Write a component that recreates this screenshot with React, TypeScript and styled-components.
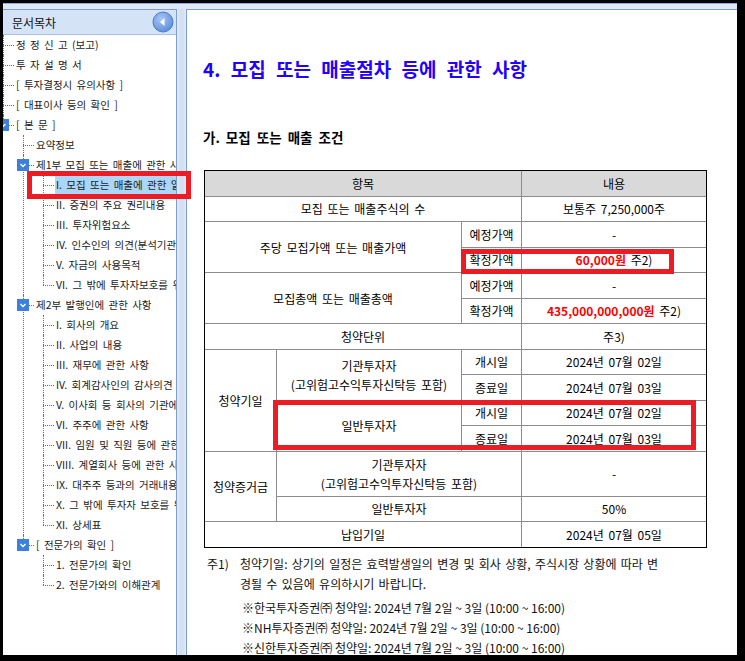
import React from "react";
import styled, { createGlobalStyle } from "styled-components";

const GlobalStyle = createGlobalStyle`
  html, body {
    margin: 0;
    padding: 0;
    background: #000;
  }
  body {
    font-family: "Noto Sans CJK KR", "Noto Sans", sans-serif;
    color: #000;
  }
`;

const Screen = styled.div`
  position: relative;
  width: 745px;
  height: 661px;
  box-sizing: border-box;
  padding: 3px 8px 6px 3px;
  background: #000;
`;

const Frame = styled.div`
  display: flex;
  height: 100%;
  box-sizing: border-box;
  padding-top: 5px;
  background: #dfe8f6;
  border-top: 1px solid #8eaee0;
`;

const Sidebar = styled.aside`
  width: 174px;
  flex: none;
  display: flex;
  flex-direction: column;
  box-sizing: border-box;
  background: #fff;
  border-top: 1px solid #7a9fd6;
  border-right: 1px solid #7a9fd6;
  overflow: hidden;
`;

const SideHeader = styled.div`
  height: 24px;
  flex: none;
  display: flex;
  align-items: center;
  justify-content: space-between;
  padding: 0 2px 0 9px;
  background: #d5e3f7;
  border-bottom: 1px solid #a9c1e8;
  font-size: 12px;
  color: #111;
`;

const CollapseButton = styled.button`
  width: 22px;
  height: 22px;
  padding: 0;
  border: none;
  background: none;
  display: flex;
`;

const Tree = styled.div`
  flex: 1;
  overflow: hidden;
`;

const Branch = styled.ul<{ $root?: boolean }>`
  list-style: none;
  margin: 0;
  padding: 0 0 0 ${(p) => (p.$root ? 0 : 20)}px;
`;

const Node = styled.li<{ $last?: boolean }>`
  position: relative;
  &::before {
    content: "";
    position: absolute;
    left: 0;
    top: 0;
    ${(p) => (p.$last ? "height: 10px;" : "bottom: 0;")}
    border-left: 1px dotted #6d6d6d;
  }
  &::after {
    content: "";
    position: absolute;
    left: 0;
    top: 10px;
    width: 11px;
    border-top: 1px dotted #6d6d6d;
  }
`;

const NodeRow = styled.div`
  position: relative;
  height: 20px;
  display: flex;
  padding-left: 12px;
`;

const NodeLabel = styled.span<{ $selected?: boolean }>`
  flex: 1;
  min-width: 0;
  white-space: nowrap;
  overflow: hidden;
  font-size: 10.5px;
  line-height: 20px;
  word-spacing: 2px;
  color: #1a1a1a;
  padding-left: 1px;
  background: ${(p) => (p.$selected ? "#acd6f7" : "transparent")};
`;

const Toggle = styled.span`
  position: absolute;
  z-index: 1;
  left: -6px;
  top: 4px;
  width: 12px;
  height: 12px;
  display: flex;
`;

const Splitter = styled.div`
  width: 9px;
  flex: none;
  background: linear-gradient(90deg, #e2eaf7 0%, #d3def0 45%, #d3def0 60%, #e2eaf7 100%);
`;

const Content = styled.main`
  flex: 1;
  min-width: 0;
  box-sizing: border-box;
  background: #fff;
  border-top: 1px solid #7a9fd6;
  border-left: 1px solid #7a9fd6;
  padding: 47px 0 0 16px;
  overflow: hidden;
`;

const Title = styled.h1`
  margin: 0;
  font-size: 19px;
  line-height: 24px;
  font-weight: 700;
  color: #2200ff;
  word-spacing: 6px;
`;

const SubTitle = styled.h2`
  margin: 47px 0 0;
  font-size: 13.5px;
  line-height: 18px;
  font-weight: 700;
  word-spacing: 3px;
  color: #000;
`;

const TableWrap = styled.div`
  position: relative;
  width: 502px;
  margin: 24px 0 0 1px;
`;

const Table = styled.table`
  width: 502px;
  table-layout: fixed;
  border-collapse: collapse;
  outline: 1px solid #000;
  outline-offset: -1px;
`;

const Row = styled.tr<{ $tall?: boolean }>`
  height: ${(p) => (p.$tall ? 45 : 25.5)}px;
`;

const Cell = styled.td<{ $head?: boolean }>`
  border: 1px solid #8c8c8c;
  padding: 0 2px;
  text-align: center;
  vertical-align: middle;
  font-size: 12px;
  line-height: 19px;
  word-spacing: 2px;
  color: #000;
  background: ${(p) => (p.$head ? "#d9d9d9" : "#fff")};
`;

const Amount = styled.b`
  color: #ff0000;
  font-weight: 700;
`;

const Mark = styled.div`
  position: absolute;
  box-sizing: border-box;
  border: 5px solid #ec1c24;
  pointer-events: none;
`;

const Notes = styled.div`
  margin: 6px 0 0 4px;
  font-size: 12px;
  line-height: 20px;
  color: #111;
`;

const NoteRow = styled.div`
  display: flex;
  word-spacing: 1.6px;
`;

const NoteKey = styled.span`
  width: 33px;
  flex: none;
`;

const NoteList = styled.div`
  margin: 4px 0 0 35px;
`;

type TreeItem = { label: string; selected?: boolean; children?: TreeItem[] };

const leaves = (labels: string[]): TreeItem[] => labels.map((label) => ({ label }));

const tree: TreeItem[] = [
  { label: "정 정 신 고 (보고)" },
  { label: "투 자 설 명 서" },
  { label: "[ 투자결정시 유의사항 ]" },
  { label: "[ 대표이사 등의 확인 ]" },
  {
    label: "[ 본 문 ]",
    children: [
      { label: "요약정보" },
      {
        label: "제1부 모집 또는 매출에 관한 사항",
        children: [
          { label: "I. 모집 또는 매출에 관한 일반사항", selected: true },
          ...leaves([
            "II. 증권의 주요 권리내용",
            "III. 투자위험요소",
            "IV. 인수인의 의견(분석기관의 평가의견)",
            "V. 자금의 사용목적",
            "VI. 그 밖에 투자자보호를 위해 필요한 사항",
          ]),
        ],
      },
      {
        label: "제2부 발행인에 관한 사항",
        children: leaves([
          "I. 회사의 개요",
          "II. 사업의 내용",
          "III. 재무에 관한 사항",
          "IV. 회계감사인의 감사의견 등",
          "V. 이사회 등 회사의 기관에 관한 사항",
          "VI. 주주에 관한 사항",
          "VII. 임원 및 직원 등에 관한 사항",
          "VIII. 계열회사 등에 관한 사항",
          "IX. 대주주 등과의 거래내용",
          "X. 그 밖에 투자자 보호를 위하여 필요한 사항",
          "XI. 상세표",
        ]),
      },
      {
        label: "[ 전문가의 확인 ]",
        children: leaves(["1. 전문가의 확인", "2. 전문가와의 이해관계"]),
      },
    ],
  },
];

const ToggleIcon = () => (
  <svg width="12" height="12" viewBox="0 0 12 12">
    <rect x="0" y="0" width="12" height="12" fill="#3d7fdf" />
    <polyline points="3.5,5 6,7.5 8.5,5" fill="none" stroke="#fff" strokeWidth="1.4" />
  </svg>
);

const CollapseIcon = () => (
  <svg width="22" height="22" viewBox="0 0 22 22">
    <defs>
      <radialGradient id="cb" cx="40%" cy="35%" r="70%">
        <stop offset="0%" stopColor="#a9c6f2" />
        <stop offset="100%" stopColor="#5b8ddb" />
      </radialGradient>
    </defs>
    <circle cx="11" cy="11" r="10" fill="url(#cb)" stroke="#4b7bcd" strokeWidth="1" />
    <polygon points="12.5,7 12.5,15 8,11" fill="#fff" />
  </svg>
);

const TreeBranch = ({ items, root }: { items: TreeItem[]; root?: boolean }) => (
  <Branch $root={root}>
    {items.map((item, i) => (
      <Node key={item.label} $last={i === items.length - 1}>
        <NodeRow>
          {item.children && (
            <Toggle>
              <ToggleIcon />
            </Toggle>
          )}
          <NodeLabel $selected={item.selected}>{item.label}</NodeLabel>
        </NodeRow>
        {item.children && <TreeBranch items={item.children} />}
      </Node>
    ))}
  </Branch>
);

const institution = (
  <>
    기관투자자
    <br />
    (고위험고수익투자신탁등 포함)
  </>
);

export default function App() {
  return (
    <Screen>
      <GlobalStyle />
      <Frame>
        <Sidebar>
          <SideHeader>
            문서목차
            <CollapseButton aria-label="접기">
              <CollapseIcon />
            </CollapseButton>
          </SideHeader>
          <Tree>
            <TreeBranch items={tree} root />
          </Tree>
        </Sidebar>
        <Splitter />
        <Content>
          <Title>4. 모집 또는 매출절차 등에 관한 사항</Title>
          <SubTitle>가. 모집 또는 매출 조건</SubTitle>
          <TableWrap>
            <Table>
              <colgroup>
                <col style={{ width: 72 }} />
                <col style={{ width: 185 }} />
                <col style={{ width: 60 }} />
                <col style={{ width: 185 }} />
              </colgroup>
              <tbody>
                <Row>
                  <Cell $head colSpan={3}>항목</Cell>
                  <Cell $head>내용</Cell>
                </Row>
                <Row>
                  <Cell colSpan={3}>모집 또는 매출주식의 수</Cell>
                  <Cell>보통주 7,250,000주</Cell>
                </Row>
                <Row>
                  <Cell colSpan={2} rowSpan={2}>주당 모집가액 또는 매출가액</Cell>
                  <Cell>예정가액</Cell>
                  <Cell>-</Cell>
                </Row>
                <Row>
                  <Cell>확정가액</Cell>
                  <Cell>
                    <Amount>60,000원</Amount> 주2)
                  </Cell>
                </Row>
                <Row>
                  <Cell colSpan={2} rowSpan={2}>모집총액 또는 매출총액</Cell>
                  <Cell>예정가액</Cell>
                  <Cell>-</Cell>
                </Row>
                <Row>
                  <Cell>확정가액</Cell>
                  <Cell>
                    <Amount>435,000,000,000원</Amount> 주2)
                  </Cell>
                </Row>
                <Row>
                  <Cell colSpan={3}>청약단위</Cell>
                  <Cell>주3)</Cell>
                </Row>
                <Row>
                  <Cell rowSpan={4}>청약기일</Cell>
                  <Cell rowSpan={2}>{institution}</Cell>
                  <Cell>개시일</Cell>
                  <Cell>2024년 07월 02일</Cell>
                </Row>
                <Row>
                  <Cell>종료일</Cell>
                  <Cell>2024년 07월 03일</Cell>
                </Row>
                <Row>
                  <Cell rowSpan={2}>일반투자자</Cell>
                  <Cell>개시일</Cell>
                  <Cell>2024년 07월 02일</Cell>
                </Row>
                <Row>
                  <Cell>종료일</Cell>
                  <Cell>2024년 07월 03일</Cell>
                </Row>
                <Row $tall>
                  <Cell rowSpan={2}>청약증거금</Cell>
                  <Cell colSpan={2}>{institution}</Cell>
                  <Cell>-</Cell>
                </Row>
                <Row>
                  <Cell colSpan={2}>일반투자자</Cell>
                  <Cell>50%</Cell>
                </Row>
                <Row>
                  <Cell colSpan={3}>납입기일</Cell>
                  <Cell>2024년 07월 05일</Cell>
                </Row>
              </tbody>
            </Table>
            <Mark style={{ left: 257, top: 79, width: 213, height: 25 }} />
            <Mark style={{ left: 69, top: 230, width: 423, height: 50 }} />
          </TableWrap>
          <Notes>
            <NoteRow>
              <NoteKey>주1)</NoteKey>
              <span>
                청약기일: 상기의 일정은 효력발생일의 변경 및 회사 상황, 주식시장 상황에 따라 변
                <br />
                경될 수 있음에 유의하시기 바랍니다.
              </span>
            </NoteRow>
            <NoteList>
              <div>※한국투자증권㈜ 청약일: 2024년 7월 2일 ~ 3일 (10:00 ~ 16:00)</div>
              <div>※NH투자증권㈜ 청약일: 2024년 7월 2일 ~ 3일 (10:00 ~ 16:00)</div>
              <div>※신한투자증권㈜ 청약일: 2024년 7월 2일 ~ 3일 (10:00 ~ 16:00)</div>
            </NoteList>
          </Notes>
        </Content>
      </Frame>
      <Mark style={{ left: 27, top: 171, width: 164, height: 28 }} />
    </Screen>
  );
}
